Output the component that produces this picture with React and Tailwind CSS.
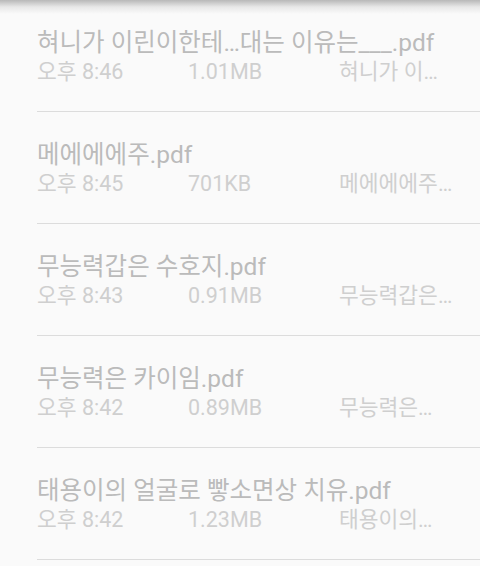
import React from 'react';

const files = [
  { name: '혀니가 이린이한테…대는 이유는___.pdf', time: '오후 8:46', size: '1.01MB', preview: '혀니가 이…' },
  { name: '메에에에주.pdf', time: '오후 8:45', size: '701KB', preview: '메에에에주…' },
  { name: '무능력갑은 수호지.pdf', time: '오후 8:43', size: '0.91MB', preview: '무능력갑은…' },
  { name: '무능력은 카이임.pdf', time: '오후 8:42', size: '0.89MB', preview: '무능력은…' },
  { name: '태용이의 얼굴로 빻소면상 치유.pdf', time: '오후 8:42', size: '1.23MB', preview: '태용이의…' },
];

function FileRow({ file }) {
  return (
    <li className="h-[112px] pl-[37px] flex flex-col">
      <div className="flex-1 pt-[28px]">
        <p className="text-[24.5px] leading-[30px] text-[#bbbbbb] whitespace-nowrap">{file.name}</p>
        <div className="mt-px flex text-[21.5px] leading-[26px] text-[#cfcfcf] whitespace-nowrap">
          <span className="w-[151px]">{file.time}</span>
          <span className="w-[151px]">{file.size}</span>
          <span>{file.preview}</span>
        </div>
      </div>
      <div className="h-px bg-[#dcdcdc]" />
    </li>
  );
}

export default function App() {
  return (
    <div
      className="relative w-[480px] h-[566px] overflow-hidden bg-[#fafafa]"
      style={{ fontFamily: 'Roboto, "Noto Sans CJK KR", sans-serif' }}
    >
      <div className="absolute top-0 left-0 right-0 h-[14px] bg-gradient-to-b from-[#b8b8b8] via-[#e8e8e8] to-[#fafafa]/0" />
      <ul>
        {files.map((f) => (
          <FileRow key={f.name} file={f} />
        ))}
      </ul>
    </div>
  );
}
